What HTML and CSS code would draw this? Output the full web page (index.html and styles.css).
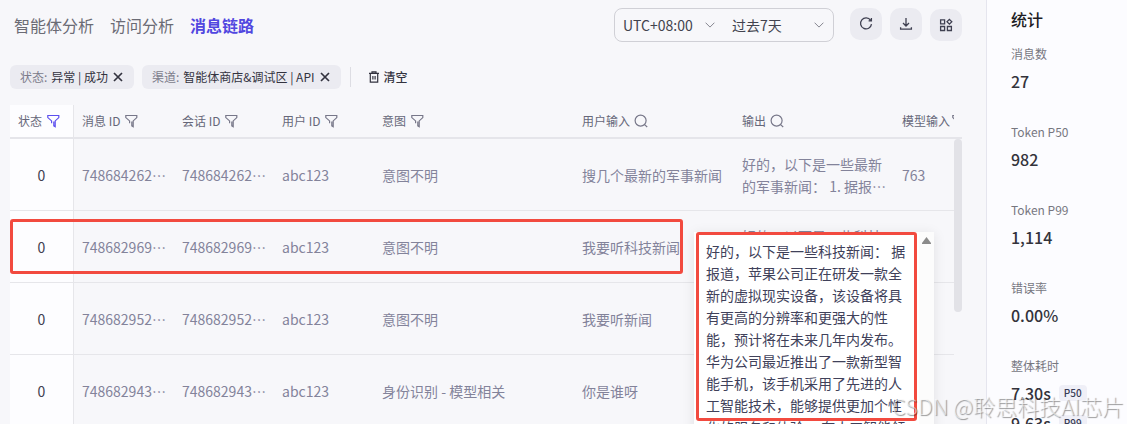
FILE: index.html
```html
<!DOCTYPE html>
<html lang="zh-CN">
<head>
<meta charset="utf-8">
<meta name="viewport" content="width=device-width, initial-scale=1">
<title>消息链路</title>
<link rel="stylesheet" href="styles.css">
</head>
<body>
<svg class="sprite" aria-hidden="true">
  <symbol id="funnel" viewBox="-1 0 14 14"><path d="M4.6 9.2V6.9L.8 3.6V1.5h11v2.1L8.2 6.9v5.7L6.8 11.8V7.4"/></symbol>
  <symbol id="search" viewBox="0 0 14 14"><circle cx="6.6" cy="6.6" r="5.5"/><path d="M10.6 10.6l2.6 2.4"/></symbol>
  <symbol id="chevron" viewBox="0 0 10 6"><path d="M.6.7 5 5.1 9.4.7"/></symbol>
  <symbol id="close" viewBox="0 0 10 10"><path d="M1 1l8 8M9 1l-8 8"/></symbol>
</svg>
<div class="app">
  <main class="main">
    <header class="topbar">
      <nav class="tabs">
        <a class="tab" href="#agent">智能体分析</a>
        <a class="tab" href="#visit">访问分析</a>
        <a class="tab tab-active" href="#trace" aria-current="page">消息链路</a>
      </nav>
      <div class="tools">
        <div class="range">
          <div class="picker picker-zone">
            <select aria-label="时区"><option>UTC+08:00</option></select>
            <svg class="chevron"><use href="#chevron"/></svg>
          </div>
          <div class="picker picker-days">
            <select aria-label="时间范围"><option>过去7天</option></select>
            <svg class="chevron"><use href="#chevron"/></svg>
          </div>
        </div>
        <div class="actions">
          <button class="icon-btn" type="button" aria-label="刷新"><svg viewBox="0 0 14 14"><path d="M11.6 3.3A5.5 5.5 0 1 0 12.5 7.2M12.4.9v2.9H9.6"/></svg></button>
          <button class="icon-btn" type="button" aria-label="下载"><svg viewBox="0 0 14 14"><path d="M7 1v7.8M4 6l3 3 3-3M1.6 10.2v2h10.8v-2"/></svg></button>
          <button class="icon-btn" type="button" aria-label="列设置"><svg viewBox="0 0 14 14"><path d="M1.6 1.9h4v4h-4zM1.6 8.5h4v4h-4zM8.4 8.5h4v4h-4zM10.4 1.4l2.4 2.4-2.4 2.4L8 3.8z"/></svg></button>
        </div>
      </div>
    </header>

    <div class="filters">
      <div class="chip"><span class="chip-key">状态:</span><span>异常 | 成功</span><button class="chip-close" type="button" aria-label="移除状态"><svg><use href="#close"/></svg></button></div>
      <div class="chip"><span class="chip-key">渠道:</span><span>智能体商店&amp;调试区 | API</span><button class="chip-close" type="button" aria-label="移除渠道"><svg><use href="#close"/></svg></button></div>
      <button class="clear" type="button"><svg viewBox="0 0 10 12"><path d="M0 2.4h10M3 2.2V.8h4v1.4M1.3 2.6v8.6h7.4V2.6M3.9 5v3.6M6.1 5v3.6"/></svg>清空</button>
    </div>

    <div class="table-area">
      <div class="viewport">
        <table class="log">
          <colgroup><col class="c-state"><col class="c-id"><col class="c-id"><col class="c-id"><col class="c-intent"><col class="c-text"><col class="c-text"><col></colgroup>
          <thead>
            <tr>
              <th><span class="head head-active">状态<svg><use href="#funnel"/></svg></span></th>
              <th><span class="head">消息 ID<svg><use href="#funnel"/></svg></span></th>
              <th><span class="head">会话 ID<svg><use href="#funnel"/></svg></span></th>
              <th><span class="head">用户 ID<svg><use href="#funnel"/></svg></span></th>
              <th><span class="head">意图<svg><use href="#funnel"/></svg></span></th>
              <th><span class="head">用户输入<svg><use href="#search"/></svg></span></th>
              <th><span class="head">输出<svg><use href="#search"/></svg></span></th>
              <th><span class="head head-tight">模型输入<svg><use href="#funnel"/></svg></span></th>
            </tr>
          </thead>
          <tbody>
            <tr><td>0</td><td>748684262⋯</td><td>748684262⋯</td><td>abc123</td><td>意图不明</td><td>搜几个最新的军事新闻</td><td>好的，以下是一些最新<br>的军事新闻： 1. 据报⋯</td><td>763</td></tr>
            <tr><td>0</td><td>748682969⋯</td><td>748682969⋯</td><td>abc123</td><td>意图不明</td><td>我要听科技新闻</td><td>好的，以下是一些科技<br>新闻： 据报道，苹果⋯</td><td></td></tr>
            <tr><td>0</td><td>748682952⋯</td><td>748682952⋯</td><td>abc123</td><td>意图不明</td><td>我要听新闻</td><td></td><td></td></tr>
            <tr><td>0</td><td>748682943⋯</td><td>748682943⋯</td><td>abc123</td><td>身份识别 - 模型相关</td><td>你是谁呀</td><td></td><td></td></tr>
          </tbody>
        </table>
      </div>
      <div class="gutter"><div class="gutter-head"></div><div class="thumb"></div></div>
      <div class="row-outline"></div>
      <div class="tooltip" role="tooltip">
        <p class="tooltip-text">好的，以下是一些科技新闻： 据报道，苹果公司正在研发一款全新的虚拟现实设备，该设备将具有更高的分辨率和更强大的性能，预计将在未来几年内发布。 华为公司最近推出了一款新型智能手机，该手机采用了先进的人工智能技术，能够提供更加个性化的服务和体验。 在人工智能领</p>
        <div class="tooltip-bar"><svg viewBox="0 0 9 7"><path d="M4.5 0 9 6v1H0V6z"/></svg></div>
        <div class="tooltip-outline"></div>
      </div>
    </div>
  </main>

  <aside class="stats">
    <h2>统计</h2>
    <dl>
      <div class="stat"><dt>消息数</dt><dd>27</dd></div>
      <div class="stat"><dt>Token P50</dt><dd>982</dd></div>
      <div class="stat"><dt>Token P99</dt><dd>1,114</dd></div>
      <div class="stat"><dt>错误率</dt><dd>0.00%</dd></div>
      <div class="stat"><dt>整体耗时</dt><dd>7.30s<span class="badge">P50</span></dd><dd>9.63s<span class="badge">P99</span></dd></div>
    </dl>
  </aside>
  <div class="watermark">CSDN @聆思科技AI芯片</div>
</div>
</body>
</html>
```
FILE: styles.css
```css
* { box-sizing: border-box; }

body {
  margin: 0;
  background: #f7f7fa;
  color: #383743;
  font: 14px/22px "Noto Sans CJK SC", sans-serif;
}

button, select { font: inherit; color: inherit; border: 0; background: none; padding: 0; margin: 0; }
svg { fill: none; stroke: currentColor; flex: none; display: block; }
.sprite { position: absolute; width: 0; height: 0; }

.app { position: relative; display: flex; height: 100vh; overflow: hidden; }
.main { flex: 1; min-width: 0; padding: 8px 24px 0 10px; display: flex; flex-direction: column; }

.topbar { display: flex; justify-content: space-between; align-items: flex-start; }
.tabs { display: flex; gap: 16px; padding: 5px 4px; }
.tab { font-size: 16px; line-height: 24px; color: #6b6b75; text-decoration: none; white-space: nowrap; }
.tab-active { color: #5147e0; font-weight: 700; }

.tools { display: flex; gap: 16px; }
.range { display: flex; width: 220px; height: 34px; border: 1px solid #d0d0d6; border-radius: 8px; }
.picker { display: flex; align-items: center; position: relative; }
.picker-zone { width: 109px; }
.picker-days { flex: 1; }
.picker select { appearance: none; width: 100%; height: 100%; padding-left: 8px; color: #42434e; }
.chevron { position: absolute; right: 9px; width: 10px; height: 6px; color: #85858f; pointer-events: none; }
.actions { display: flex; gap: 8px; }
.icon-btn { width: 32px; height: 32px; border-radius: 10px; background: #ebebf1; display: grid; place-items: center; color: #3f4051; }
.icon-btn svg { width: 14px; height: 14px; stroke-width: 1.3; }
.icon-btn:last-child { margin-top: 1px; }

.filters { display: flex; gap: 8px; margin-top: 23px; font-size: 12px; line-height: 24px; align-items: center; white-space: nowrap; }
.chip { display: flex; align-items: center; gap: 4px; height: 24px; padding: 0 11px 0 10px; border-radius: 6px; background: #ebebf1; color: #33333f; }
.chip-key { color: #7b7b8b; }
.chip-close { width: 10px; height: 10px; margin-left: 1px; }
.chip-close svg { width: 10px; height: 10px; stroke-width: 1.7; }
.clear { display: flex; align-items: center; gap: 5px; height: 20px; margin-left: 1px; padding-left: 18px; border-left: 1px solid #dddde3; line-height: 20px; font-weight: 500; color: #33333f; }
.clear svg { width: 10px; height: 12px; stroke-width: 1.2; }

.table-area { position: relative; display: flex; flex: 1; min-height: 0; margin-top: 16px; }
.viewport { flex: 1; min-width: 0; overflow: hidden; }
.log { width: 984px; table-layout: fixed; border-collapse: separate; border-spacing: 0; color: #83839a; }
.c-state { width: 64px; }
.c-id { width: 100px; }
.c-intent { width: 200px; }
.c-text { width: 160px; }
.log th { height: 34px; padding: 0 8px; border-bottom: 2px solid #e5e5ea; font-size: 12px; font-weight: 400; color: #666779; text-align: left; }
.log td { height: 72px; padding: 0 8px; border-bottom: 1px solid #e6e6ea; white-space: nowrap; }
.log th:first-child, .log td:first-child { background: #fdfdff; border-right: 1px solid #e6e6ea; }
.log td:first-child { text-align: center; color: #40404f; }
.head { display: flex; align-items: center; gap: 4px; white-space: nowrap; }
.head svg { width: 14px; height: 14px; stroke-width: 1.2; color: #777789; }
.head-active svg { color: #5c4fef; }
.head-tight { gap: 1px; }

.gutter { width: 8px; flex: none; }
.gutter-head { height: 34px; border-bottom: 2px solid #e5e5ea; }
.thumb { height: 173px; border-radius: 4px; background: #e2e2e7; }

.row-outline { position: absolute; left: 0; top: 114px; width: 673px; height: 55px; border: 3px solid #f24a3f; border-radius: 3px; }

.tooltip { position: absolute; left: 684px; top: 127px; width: 240px; height: 240px; display: flex; overflow: hidden; background: #fff; box-shadow: 0 2px 12px #00000018; color: #40415a; }
.tooltip-text { flex: 1; margin: 0; padding: 8px 12px; }
.tooltip-bar { width: 15px; padding: 5px 3px; background: #fcfcfc; }
.tooltip-bar svg { width: 9px; height: 7px; fill: #8b8b8b; stroke: none; }
.tooltip-outline { position: absolute; left: 2px; top: 0; width: 221px; height: 189px; border: 3px solid #f24a3f; border-radius: 3px; }

.stats { width: 141px; flex: none; padding: 7px 0 0 24px; border-left: 1px solid #e5e5ee; background: #fcfcff; }
.stats h2 { margin: 0 0 13px; font-size: 16px; line-height: 24px; font-weight: 500; color: #1c1c23; }
.stats dl { margin: 0; }
.stat { margin-bottom: 20px; }
.stat dt { font-size: 12px; line-height: 20px; margin-bottom: 2px; color: #77777f; }
.stat dd { display: flex; align-items: center; gap: 8px; height: 30px; margin: 0; font-size: 16px; line-height: 24px; font-weight: 500; color: #33333b; }
.stat:not(:last-child) { height: 58px; }
.badge { padding: 0 5px; border-radius: 4px; background: #efeff7; font-size: 10px; line-height: 16px; color: #383b55; }

.watermark { position: absolute; right: 3px; bottom: 4px; font-size: 22px; line-height: 30px; font-weight: 300; color: #ffffff90; text-shadow: 1px 1px 1px #00000068; white-space: nowrap; pointer-events: none; }
```
